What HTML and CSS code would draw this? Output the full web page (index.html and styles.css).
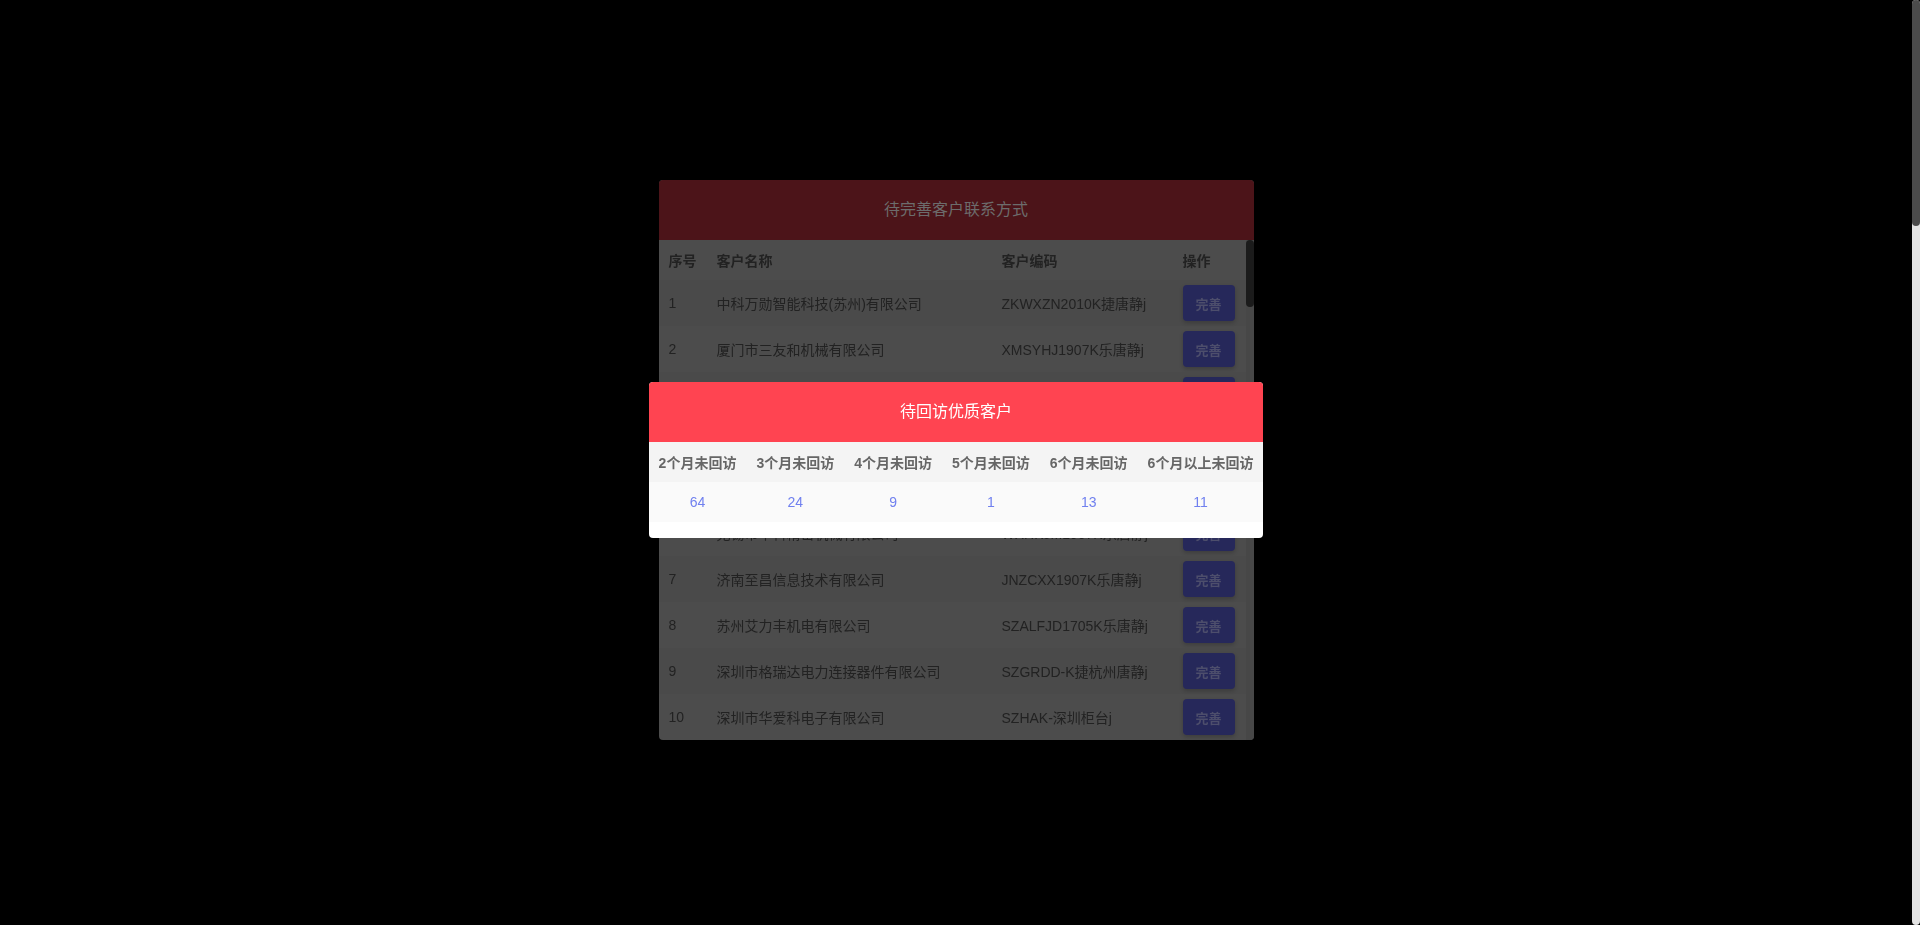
FILE: index.html
```html
<!DOCTYPE html>
<html lang="zh-CN">
<head>
<meta charset="utf-8">
<title>待回访优质客户</title>
<link rel="stylesheet" href="styles.css">
</head>
<body>
<main class="page"></main>

<div class="page-scrollbar"><div class="page-thumb"></div></div>

<div class="mask mask-back">
  <section class="dialog dialog-back">
    <header class="dialog-title title-back">待完善客户联系方式</header>
    <div class="dialog-body">
      <div class="dialog-scroll">
        <table class="contact-table">
          <colgroup>
            <col class="c-no"><col class="c-name"><col class="c-code"><col class="c-op">
          </colgroup>
          <thead>
            <tr><th>序号</th><th>客户名称</th><th>客户编码</th><th>操作</th></tr>
          </thead>
          <tbody>
            <tr><td>1</td><td>中科万勋智能科技(苏州)有限公司</td><td>ZKWXZN2010K捷唐静j</td><td><button class="btn">完善</button></td></tr>
            <tr><td>2</td><td>厦门市三友和机械有限公司</td><td>XMSYHJ1907K乐唐静j</td><td><button class="btn">完善</button></td></tr>
            <tr><td>3</td><td>上海博远自动化设备有限公司</td><td>SHBYZD1907K乐唐静j</td><td><button class="btn">完善</button></td></tr>
            <tr><td>4</td><td>杭州中恒电气股份有限公司</td><td>HZZHDQ1907K捷唐静j</td><td><button class="btn">完善</button></td></tr>
            <tr><td>5</td><td>宁波市天誉电子有限公司</td><td>NBTYDZ1907K乐唐静j</td><td><button class="btn">完善</button></td></tr>
            <tr><td>6</td><td>无锡市华科精密机械有限公司</td><td>WXHKJM1907K乐唐静j</td><td><button class="btn">完善</button></td></tr>
            <tr><td>7</td><td>济南至昌信息技术有限公司</td><td>JNZCXX1907K乐唐静j</td><td><button class="btn">完善</button></td></tr>
            <tr><td>8</td><td>苏州艾力丰机电有限公司</td><td>SZALFJD1705K乐唐静j</td><td><button class="btn">完善</button></td></tr>
            <tr><td>9</td><td>深圳市格瑞达电力连接器件有限公司</td><td>SZGRDD-K捷杭州唐静j</td><td><button class="btn">完善</button></td></tr>
            <tr><td>10</td><td>深圳市华爱科电子有限公司</td><td>SZHAK-深圳柜台j</td><td><button class="btn">完善</button></td></tr>
          </tbody>
        </table>
      </div>
      <div class="scroll-track"><div class="scroll-thumb"></div></div>
    </div>
  </section>
</div>

<div class="mask mask-front">
  <section class="dialog dialog-front">
    <header class="dialog-title title-front">待回访优质客户</header>
    <table class="visit-table">
      <thead>
        <tr><th>2个月未回访</th><th>3个月未回访</th><th>4个月未回访</th><th>5个月未回访</th><th>6个月未回访</th><th>6个月以上未回访</th></tr>
      </thead>
      <tbody>
        <tr><td>64</td><td>24</td><td>9</td><td>1</td><td>13</td><td>11</td></tr>
      </tbody>
    </table>
  </section>
</div>
</body>
</html>
```

FILE: styles.css
```css
html, body {
  margin: 0;
  padding: 0;
}

body {
  background: #000;
  font-family: "Liberation Sans", "Noto Sans CJK SC", sans-serif;
  font-size: 14px;
  overflow: hidden;
}

.page {
  display: block;
  height: 925px;
  background: #000;
}

/* viewport scrollbar */
.page-scrollbar {
  position: fixed;
  top: 0;
  right: 0;
  width: 8px;
  height: 100%;
  background: #e3e3e3;
  border-radius: 4px;
}

.page-thumb {
  height: 226px;
  background: #4b4b4b;
  border-radius: 4px;
}

.mask {
  position: fixed;
  top: 0;
  left: 0;
  right: 8px;
  bottom: 0;
  display: flex;
  align-items: center;
  justify-content: center;
  padding-bottom: 5px;
}

.mask-back {
  background: rgba(0, 0, 0, 0.7);
}

.dialog {
  border-radius: 4px;
  overflow: hidden;
}

.dialog-title {
  height: 60px;
  line-height: 60px;
  text-align: center;
  font-size: 16px;
}

/* back dialog (dimmed) */
.dialog-back {
  width: 595px;
  height: 560px;
  display: flex;
  flex-direction: column;
  background: #4c4c4c;
}

.title-back {
  flex: none;
  background: #4c1419;
  color: #6c6c6c;
}

.dialog-body {
  flex: 1;
  display: flex;
  min-height: 0;
}

.dialog-scroll {
  flex: 1;
  overflow: hidden;
}

.scroll-track {
  flex: none;
  width: 8px;
  background: #474747;
}

.scroll-thumb {
  height: 67px;
  background: #1b1b1b;
  border-radius: 4px;
}

.contact-table {
  width: 100%;
  border-collapse: collapse;
  table-layout: fixed;
  color: #222;
}

.c-no { width: 48px; }
.c-code { width: 181px; }
.c-op { width: 73px; }

.contact-table th {
  height: 40px;
  padding: 0 10px;
  text-align: left;
  font-weight: bold;
  white-space: nowrap;
}

.contact-table td {
  height: 46px;
  padding: 0 10px;
  white-space: nowrap;
}

.contact-table tbody tr:nth-child(odd) {
  background: #4a4a4a;
}

.btn {
  display: block;
  width: 52px;
  height: 36px;
  padding: 0;
  border: 0;
  border-radius: 4px;
  background: #26285a;
  color: #4d4e6c;
  font-family: inherit;
  font-size: 13px;
  font-weight: bold;
  box-shadow: 0 2px 4px rgba(0, 0, 0, 0.2);
}

/* front dialog */
.dialog-front {
  background: #fff;
  padding-bottom: 16px;
}

.title-front {
  background: #ff4451;
  color: #fff;
}

.visit-table {
  border-collapse: collapse;
}

.visit-table th {
  height: 40px;
  padding: 0 10px;
  background: #f4f4f4;
  color: #666;
  font-weight: bold;
  white-space: nowrap;
}

.visit-table td {
  height: 40px;
  padding: 0 10px;
  background: #fafafa;
  color: #7080ef;
  text-align: center;
}
```
